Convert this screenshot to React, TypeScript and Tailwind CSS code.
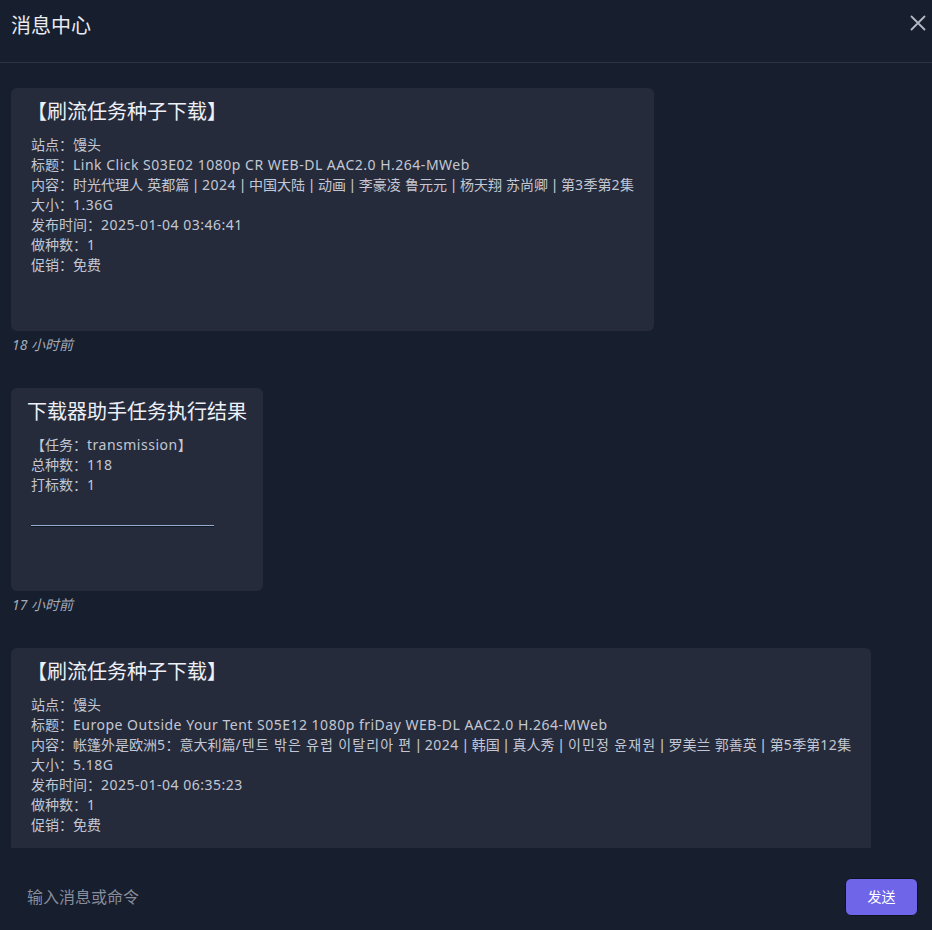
import React from "react";

const font = {
  fontFamily: '"Noto Sans", "Noto Sans CJK SC", sans-serif',
};

type Msg = {
  title: string;
  lines: string[];
  rule?: boolean;
  time?: string;
};

const messages: Msg[] = [
  {
    title: "【刷流任务种子下载】",
    lines: [
      "站点：馒头",
      "标题：Link Click S03E02 1080p CR WEB-DL AAC2.0 H.264-MWeb",
      "内容：时光代理人 英都篇 | 2024 | 中国大陆 | 动画 | 李豪凌 鲁元元 | 杨天翔 苏尚卿 | 第3季第2集",
      "大小：1.36G",
      "发布时间：2025-01-04 03:46:41",
      "做种数：1",
      "促销：免费",
    ],
    time: "18 小时前",
  },
  {
    title: "下载器助手任务执行结果",
    lines: ["【任务：transmission】", "总种数：118", "打标数：1"],
    rule: true,
    time: "17 小时前",
  },
  {
    title: "【刷流任务种子下载】",
    lines: [
      "站点：馒头",
      "标题：Europe Outside Your Tent S05E12 1080p friDay WEB-DL AAC2.0 H.264-MWeb",
      "内容：帐篷外是欧洲5：意大利篇/텐트 밖은 유럽 이탈리아 편 | 2024 | 韩国 | 真人秀 | 이민정 윤재원 | 罗美兰 郭善英 | 第5季第12集",
      "大小：5.18G",
      "发布时间：2025-01-04 06:35:23",
      "做种数：1",
      "促销：免费",
    ],
  },
];

// latin runs a little wider, pipes narrower, hangul full width, to match the original font
function Line({ text }: { text: string }) {
  const parts = text
    .split(/(\||[\uAC00-\uD7AF]|[\x20-\x7b\x7d\x7e]+)/)
    .filter(Boolean);
  return (
    <div className="whitespace-pre">
      {parts.map((p, i) => {
        if (p === "|")
          return (
            <span key={i} className="px-[0.5px] font-['Liberation_Sans']">
              |
            </span>
          );
        if (/^[\uAC00-\uD7AF]$/.test(p))
          return (
            <span key={i} className="inline-block w-[14px] text-center">
              {p}
            </span>
          );
        if (/^[\x20-\x7e]+$/.test(p))
          return (
            <span key={i} className="tracking-[0.5px]">
              {p}
            </span>
          );
        return <span key={i}>{p}</span>;
      })}
    </div>
  );
}

function MessageCard({ msg }: { msg: Msg }) {
  return (
    <div className="mb-[33px]">
      <div className="w-fit max-w-full rounded-md bg-[#252b3b] px-4 pt-3 pb-4">
        <div className="text-[20px] leading-6 text-[#eef0f6]">{msg.title}</div>
        <div className="mt-[11px] px-1 text-[14px] leading-5 text-[#c3c7d3]">
          {msg.lines.map((l, i) => (
            <Line key={i} text={l} />
          ))}
          {msg.rule ? (
            <>
              <div className="mt-[30px] h-px w-[183px] bg-[#93acd0] shadow-[0_1px_0_#111827]" />
              <div className="h-[49px]" />
            </>
          ) : (
            <div className="h-10" />
          )}
        </div>
      </div>
      {msg.time && (
        <div className="mt-1 pl-px text-[14px] leading-5 italic text-[#a4aab8]">
          {msg.time}
        </div>
      )}
    </div>
  );
}

export default function App() {
  return (
    <div className="flex h-[930px] w-full flex-col overflow-hidden bg-[#171e2d]" style={font}>
      {/* Header */}
      <div className="flex h-[63px] shrink-0 items-center justify-between border-b border-[#2d3444] pl-[11px] pr-[2px]">
        <div className="-mt-[11px] text-[20px] text-[#e9ebf2]">消息中心</div>
        <button className="-mt-[17px] flex h-6 w-6 items-center justify-center text-[#b4b8c4]">
          <svg width="16" height="16" viewBox="0 0 16 16" fill="none" stroke="currentColor" strokeWidth="1.8" strokeLinecap="round">
            <path d="M1.5 1.5l13 13M14.5 1.5l-13 13" />
          </svg>
        </button>
      </div>

      {/* Messages */}
      <div className="min-h-0 flex-1 overflow-hidden px-[11px] pt-[25px]">
        {messages.map((m, i) => (
          <MessageCard key={i} msg={m} />
        ))}
      </div>

      {/* Input */}
      <div className="flex h-[82px] shrink-0 items-center gap-3 pt-[15px] pl-[27px] pr-[14px]">
        <input
          className="min-w-0 flex-1 bg-transparent text-[16px] text-[#c3c7d3] outline-none placeholder:text-[#878d9c]"
          placeholder="输入消息或命令"
          style={font}
        />
        <button className="h-[38px] w-[73px] rounded-md border border-[#0f1320] bg-[#6e65e8] text-[14px] text-white">
          发送
        </button>
      </div>
    </div>
  );
}
